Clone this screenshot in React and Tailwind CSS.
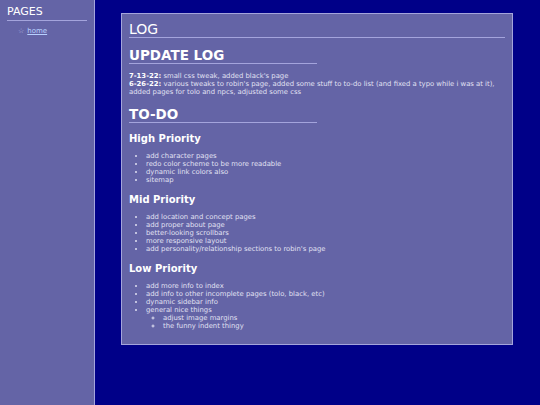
import React from 'react';

const updates = [
    { date: '7-13-22:', text: "small css tweak, added black's page" },
    { date: '6-26-22:', text: "various tweaks to robin's page, added some stuff to to-do list (and fixed a typo while i was at it), added pages for tolo and npcs, adjusted some css" },
];

const todo = [
    {
        title: 'High Priority',
        items: ['add character pages', 'redo color scheme to be more readable', 'dynamic link colors also', 'sitemap'],
    },
    {
        title: 'Mid Priority',
        items: [
            'add location and concept pages',
            'add proper about page',
            'better-looking scrollbars',
            'more responsive layout',
            "add personality/relationship sections to robin's page",
        ],
    },
    {
        title: 'Low Priority',
        items: [
            'add more info to index',
            'add info to other incomplete pages (tolo, black, etc)',
            'dynamic sidebar info',
            { text: 'general nice things', sub: ['adjust image margins', 'the funny indent thingy'] },
        ],
    },
];

const App = () => {
    return (
        <div className="flex min-h-[405px] bg-[#000088] font-['DejaVu_Sans',Verdana,sans-serif] text-[#e0e0f2]">
            <aside className="w-[95px] shrink-0 bg-[#6464a6] border-r border-[#a4a4dc] px-[7px] pt-[5px]">
                <h2 className="text-[11px] leading-[14px] text-white border-b border-[#a4a4dc] pb-[1px]">PAGES</h2>
                <ul className="mt-[6px] pl-[11px] text-[7px] leading-[9px]">
                    <li className="flex gap-[3px]">
                        <span className="text-[#b8b8e0]">☆</span>
                        <a href="#" className="text-[#b8d0ff] underline">home</a>
                    </li>
                </ul>
            </aside>

            <main className="flex-1 pl-[26px] pr-[27px] pt-[13px]">
                <div className="bg-[#6464a6] border border-[#a4a4dc] px-[7px] pt-[8px] pb-[14px]">
                    <h1 className="text-[14px] leading-[15px] text-white border-b border-[#a4a4dc]">LOG</h1>

                    <h2 className="mt-[10px] w-1/2 text-[13.5px] leading-[15px] font-bold text-white border-b border-[#a4a4dc]">UPDATE LOG</h2>
                    <div className="mt-[8px] text-[6.85px] leading-[8px]">
                        {updates.map(u => (
                            <p key={u.date}>
                                <b className="text-white">{u.date}</b> {u.text}
                            </p>
                        ))}
                    </div>

                    <h2 className="mt-[11px] w-1/2 text-[13.5px] leading-[15px] font-bold text-white border-b border-[#a4a4dc]">TO-DO</h2>

                    {todo.map(section => (
                        <div key={section.title}>
                            <h3 className="mt-[10px] text-[10px] leading-[12px] font-bold text-white">{section.title}</h3>
                            <ul className="mt-[7px] pl-[17px] list-disc text-[6.85px] leading-[8px]">
                                {section.items.map(item => typeof item === 'string' ? (
                                    <li key={item}>{item}</li>
                                ) : (
                                    <li key={item.text}>
                                        {item.text}
                                        <ul className="pl-[17px] list-[circle]">
                                            {item.sub.map(s => <li key={s}>{s}</li>)}
                                        </ul>
                                    </li>
                                ))}
                            </ul>
                        </div>
                    ))}
                </div>
            </main>
        </div>
    );
};

export default App;
